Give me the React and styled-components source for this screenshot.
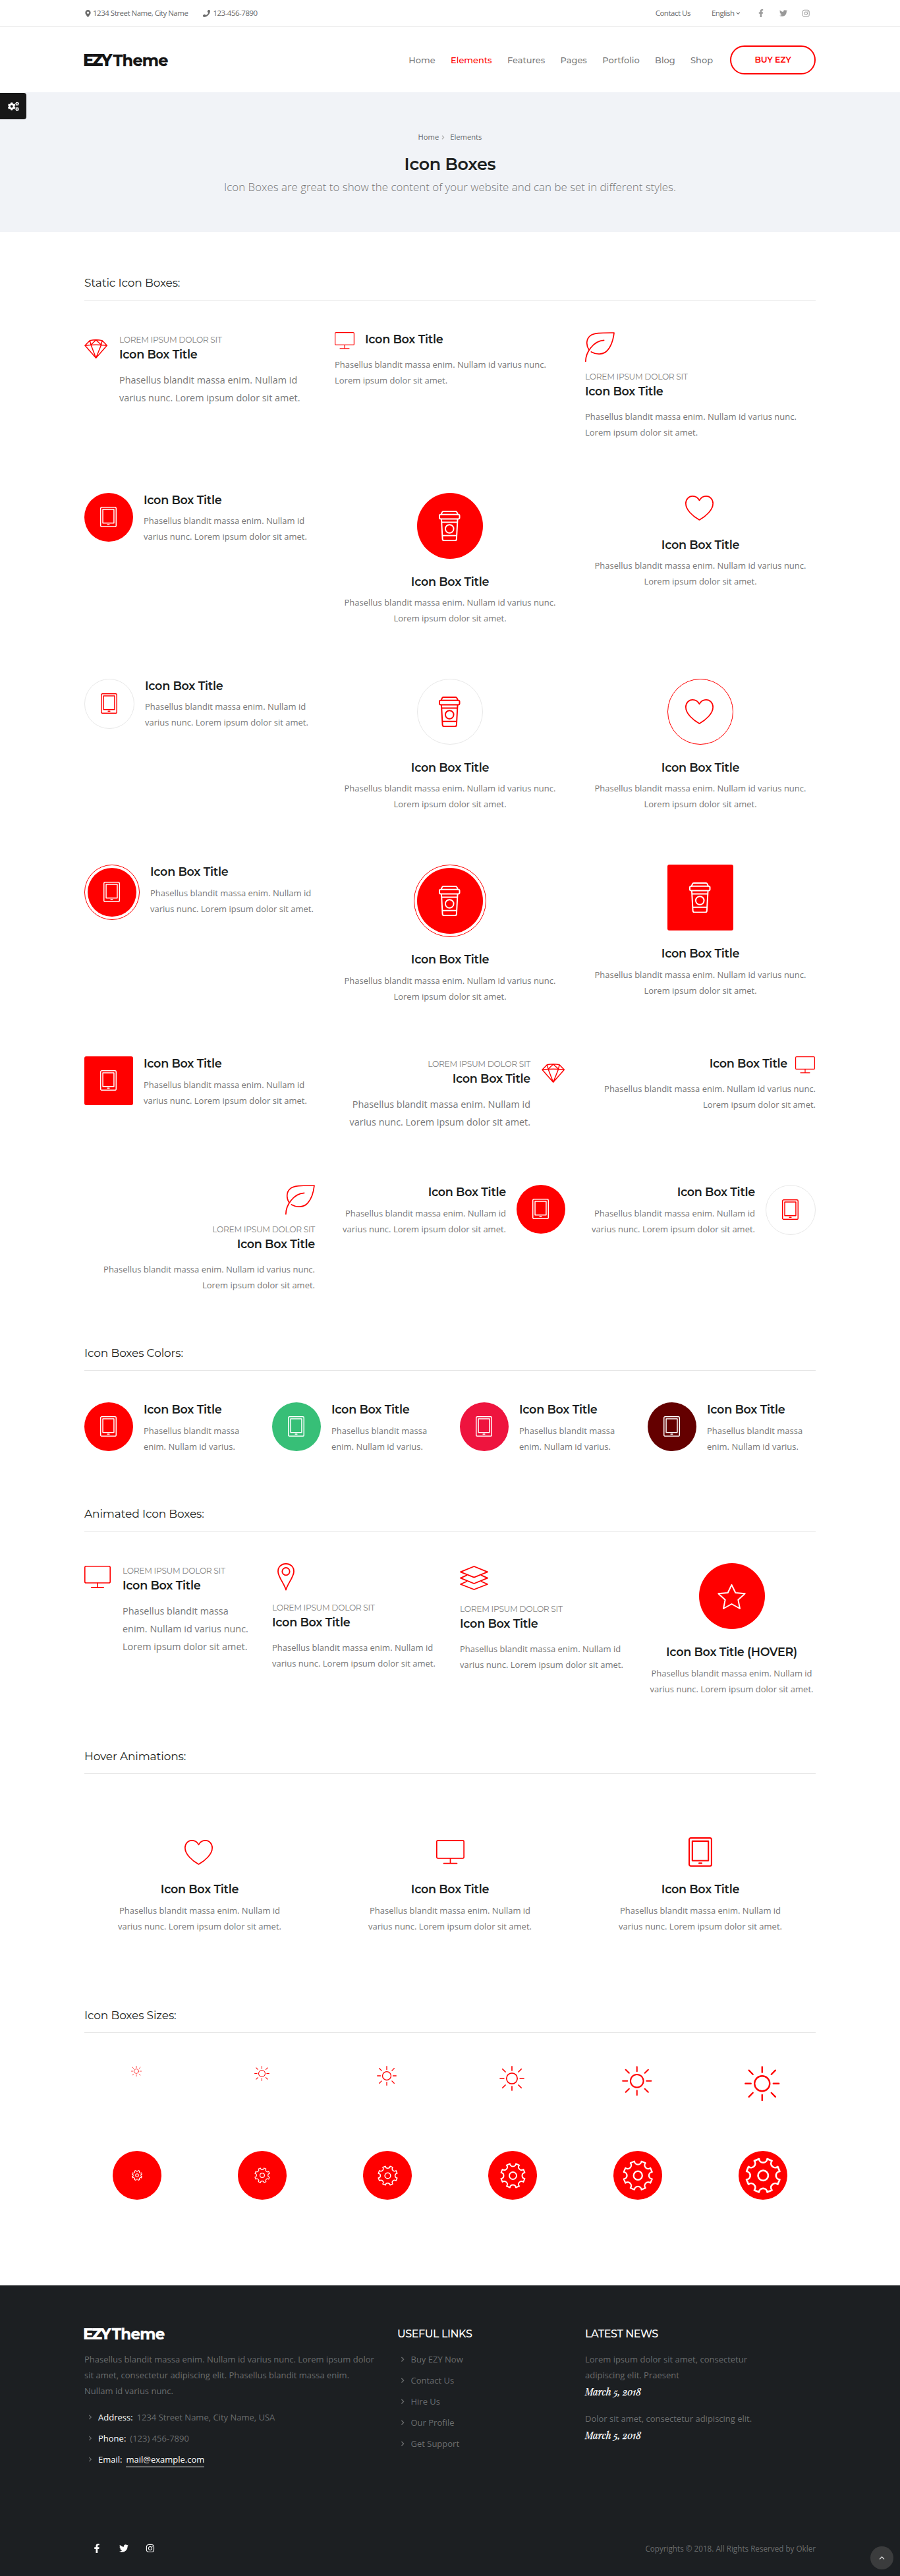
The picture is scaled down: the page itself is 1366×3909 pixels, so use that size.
import React from "react";
import styled, { createGlobalStyle, css } from "styled-components";
import {
  FaMapMarkerAlt,
  FaPhone,
  FaFacebookF,
  FaTwitter,
  FaInstagram,
  FaCogs,
  FaChevronRight,
  FaChevronDown,
  FaChevronUp,
} from "react-icons/fa";

const RED = "#ff0000";
const HEAD = '"Montserrat", "Inter", "Open Sans", sans-serif';

const Global = createGlobalStyle`
  *, *::before, *::after { box-sizing: border-box; }
  body {
    margin: 0;
    background: #fff;
    color: #777;
    font-family: "Open Sans", "Noto Sans", sans-serif;
    font-size: 13px;
    line-height: 24px;
  }
  h1, h2, h3, h4, p, ul { margin: 0; padding: 0; }
  ul { list-style: none; }
  a { color: inherit; text-decoration: none; }
  svg { display: block; flex: none; }
`;

/* ---------- line icons ---------- */

const gearPath = (() => {
  const pt = (deg) => {
    const a = (deg * Math.PI) / 180;
    return `${(82 + 78 * Math.cos(a)).toFixed(2)} ${(82 + 78 * Math.sin(a)).toFixed(2)}`;
  };
  let d = "";
  for (let k = 0; k < 8; k += 1) {
    d += `${k ? "L" : "M"}${pt(45 * k - 14)}A19 19 0 0 0 ${pt(45 * k + 14)}`;
  }
  return `${d}Z`;
})();

const ICONS = {
  diamond: {
    w: 105, h: 88, sw: 4.4,
    body: (
      <path d="M3 28L25 5Q53 0 81 5L103 28L53 85ZM3 28Q53 21 103 28M25 5L30 25L53 3L77 25L81 5M30 25L53 85L77 25" />
    ),
  },
  monitor: {
    w: 90, h: 77, sw: 3.6,
    body: (
      <>
        <rect x="1.8" y="1.8" width="86.4" height="56.6" rx="4" />
        <path d="M45 59V74M24 74.5H66" />
      </>
    ),
  },
  leaf: {
    w: 135, h: 136, sw: 5.2,
    body: (
      <>
        <path d="M2.6 133C2.6 95 35 40 86 37" />
        <path d="M18 81C4 60 4 32 24 16C42 2 75 3 132 3C128 40 118 65 102 83C85 103 52 104 28 90" />
      </>
    ),
  },
  tablet: {
    w: 74, h: 92, sw: 4.4, mr: 1, mb: 1,
    body: (
      <>
        <rect x="2.2" y="2.2" width="69.6" height="87.6" rx="5" />
        <rect x="12" y="12" width="50" height="61" />
        <path d="M33 81H41" />
      </>
    ),
  },
  coffee: {
    w: 98, h: 140, sw: 6, mr: 1,
    body: (
      <>
        <path d="M11 17L15 7Q17 3 21 3H77Q81 3 83 7L87 17" />
        <rect x="3" y="17" width="92" height="21" rx="6" />
        <path d="M12 39L17 131Q18 137 24 137H74Q80 137 81 131L86 39M14 53H84M17 114H81" />
        <circle cx="49" cy="83" r="19" />
      </>
    ),
  },
  heart: {
    w: 129, h: 114, sw: 5.2, mr: 2.5,
    body: (
      <path d="M64.5 22C56 6 44 2.6 34 2.6C16 2.6 2.6 17 2.6 36C2.6 66 36 95 64.5 111C93 95 126.4 66 126.4 36C126.4 17 113 2.6 95 2.6C85 2.6 73 6 64.5 22Z" />
    ),
  },
  pin: {
    w: 78, h: 126, sw: 5.4,
    body: (
      <>
        <path d="M39 122C34 98 3 62 3 38C3 17 18 3 39 3S75 17 75 38C75 62 44 98 39 122Z" />
        <circle cx="39" cy="38" r="17" />
      </>
    ),
  },
  layers: {
    w: 129, h: 111, sw: 5.4,
    body: (
      <path d="M64.5 3L126 28L64.5 53L3 28ZM30 44L3 56L64.5 81L126 56L99 44M30 72L3 84L64.5 108L126 84L99 72" />
    ),
  },
  star: {
    w: 129, h: 117, sw: 6, mr: 1,
    body: (
      <path d="M64.5 6L82 42L125 46L94 74L102 114L64.5 93L27 114L35 74L4 46L47 42Z" />
    ),
  },
  sun: {
    w: 160, h: 160, sw: 7, mr: 2,
    body: (
      <>
        <circle cx="80" cy="80" r="34.5" />
        <path d="M80 4V29M80 131V156M4 80H29M131 80H156M20 20L38 38M122 122L140 140M140 20L122 38M38 122L20 140" />
      </>
    ),
  },
  gear: {
    w: 164, h: 164, sw: 8, min: 1.1,
    body: (
      <>
        <path d={gearPath} />
        <circle cx="82" cy="82" r="23" />
      </>
    ),
  },
};

const Glyph = styled.svg`
  margin: 0 ${(p) => p.$mr || 0}px ${(p) => p.$mb || 0}px 0;
`;

function Icon({ name, width }) {
  const icon = ICONS[name];
  return (
    <Glyph
      $mr={icon.mr}
      $mb={icon.mb}
      width={width}
      height={(width * icon.h) / icon.w}
      viewBox={`0 0 ${icon.w} ${icon.h}`}
      fill="none"
      stroke="currentColor"
      strokeWidth={Math.max(icon.sw, ((icon.min || 0) * icon.w) / width)}
      strokeLinecap="round"
      strokeLinejoin="round"
    >
      {icon.body}
    </Glyph>
  );
}

/* ---------- shared layout ---------- */

const Page = styled.div`
  position: relative;
  width: 1366px;
  height: 3909px;
  overflow: hidden;
`;

const Container = styled.div`
  width: 1110px;
  margin: 0 auto;
`;

/* ---------- header ---------- */

const TopBar = styled.div`
  height: 41px;
  border-bottom: 1px solid #ececec;
  font-size: 11.52px;
  letter-spacing: -0.5px;
  color: #6a6a6a;
`;

const TopInner = styled(Container)`
  display: flex;
  align-items: center;
  height: 40px;
`;

const TopItem = styled.span`
  display: flex;
  align-items: center;
  gap: ${(p) => p.$gap || 4}px;
  margin-right: ${(p) => p.$mr || 0}px;
`;

const Spacer = styled.span`
  flex: 1;
`;

const TopSocial = styled.span`
  display: flex;
  align-items: center;
  color: #999;
  gap: 22px;
  padding-right: 8.5px;
`;

const NavBar = styled(Container)`
  display: flex;
  align-items: center;
  height: 99px;
  padding-top: 1px;
`;

const Nav = styled.nav`
  display: flex;
  gap: 23.4px;
  margin-left: auto;
  margin-right: 26px;
  font: 500 12.96px/24px ${HEAD};
`;

const NavLink = styled.a`
  white-space: nowrap;
  color: ${(p) => (p.$active ? RED : "#7c7c7c")};
`;

const BuyButton = styled.a`
  display: flex;
  align-items: center;
  justify-content: center;
  width: 130px;
  height: 44px;
  padding-bottom: 1px;
  border: 2px solid ${RED};
  border-radius: 22px;
  color: ${RED};
  font: 600 12.5px/20px ${HEAD};
  letter-spacing: -0.1px;
`;

const LogoMark = styled.svg`
  margin: -4px -3px;
`;

function Logo({ width, color }) {
  const k = width / 127;
  return (
    <LogoMark width={143 * k} height={30 * k} viewBox="-3 -4 143 30" fill={color}>
      <text x="-2" y="19.5" fontFamily="Montserrat, Inter, sans-serif" fontWeight="800" fontSize="24.4" textLength="44.5" lengthAdjust="spacing">
        EZY
      </text>
      <text x="43.5" y="19.5" fontFamily="Montserrat, Inter, sans-serif" fontWeight="700" fontSize="24" textLength="84" lengthAdjust="spacing" stroke={color} strokeWidth="0.3">
        Theme
      </text>
    </LogoMark>
  );
}

const SettingsTab = styled.div`
  position: absolute;
  left: 0;
  top: 141px;
  display: flex;
  align-items: center;
  justify-content: center;
  width: 40px;
  height: 40px;
  border-radius: 0 4px 4px 0;
  background: #171717;
  color: #fff;
`;

const Hero = styled.section`
  display: flex;
  flex-direction: column;
  align-items: center;
  height: 212px;
  padding-top: 58px;
  background: #f1f3f7;
`;

const Crumbs = styled.div`
  display: flex;
  align-items: center;
  height: 20px;
  font-size: 11.2px;
  color: #666;
  svg { margin: 0 7px 0 3px; color: #aaa; }
`;

const HeroTitle = styled.h1`
  margin-top: 15px;
  font: 600 25.4px/32px ${HEAD};
  letter-spacing: -0.3px;
  color: #1c1f21;
`;

const HeroText = styled.p`
  margin-top: 4px;
  font-size: 16.9px;
  font-weight: 300;
  line-height: 30px;
  color: #777;
`;

/* ---------- sections ---------- */

const SectionTitle = styled.h2`
  height: 39px;
  margin-bottom: ${(p) => p.$mb || 48}px;
  border-bottom: 1px solid #e4e4e4;
  color: #1c1f21;
  font: 400 17px/24px ${HEAD};
  letter-spacing: -0.14px;
`;

const Row = styled.div`
  --text-gap: ${(p) => (p.$tight ? 9 : 10)}px;
  display: grid;
  grid-template-columns: repeat(${(p) => p.$cols || 3}, minmax(0, 1fr));
  column-gap: 30px;
  align-items: start;
  height: ${(p) => p.$h}px;
`;

const SideBox = styled.div`
  display: flex;
  flex-direction: ${(p) => (p.$reverse ? "row-reverse" : "row")};
  align-items: flex-start;
  gap: ${(p) => p.$gap || 16}px;
  text-align: ${(p) => (p.$reverse ? "right" : "left")};
`;

const StackBox = styled.div`
  display: flex;
  flex-direction: column;
  align-items: ${(p) => ({ left: "flex-start", right: "flex-end", center: "center" }[p.$align || "left"])};
  text-align: ${(p) => p.$align || "left"};
  padding: 0 ${(p) => p.$px || 0}px;
`;

const Body = styled.div`
  flex: 1;
  min-width: 0;
`;

const Label = styled.div`
  padding-top: 1px;
  font: 400 12.3px/22px ${HEAD};
  letter-spacing: -0.33px;
  text-transform: uppercase;
  color: #858585;
`;

const Title = styled.h4`
  padding: 1px 0;
  color: #1c1f21;
  font: 600 17.6px/19px ${HEAD};
  letter-spacing: -0.3px;
  white-space: nowrap;
`;

const Text = styled.p`
  margin-top: ${(p) => (p.$mt ? `${p.$mt}px` : "var(--text-gap)")};
  font-size: ${(p) => (p.$large ? 14.4 : 13)}px;
  line-height: ${(p) => (p.$large ? 27 : 24)}px;
`;

const IconSlot = styled.div`
  display: flex;
  flex: none;
  justify-content: ${(p) => (p.$center ? "center" : "flex-start")};
  height: ${(p) => p.$h}px;
  padding-top: ${(p) => p.$pt || 0}px;
  margin-bottom: ${(p) => p.$mb || 0}px;
  color: ${RED};
`;

const TitleLine = styled.div`
  display: flex;
  flex-direction: ${(p) => (p.$reverse ? "row-reverse" : "row")};
  gap: ${(p) => (p.$reverse ? 12 : 16)}px;
  height: 22px;
  padding-right: ${(p) => (p.$reverse ? 1 : 0)}px;
  color: ${RED};
`;

const Badge = styled.div`
  display: flex;
  flex: none;
  align-items: center;
  justify-content: center;
  width: ${(p) => p.$size}px;
  height: ${(p) => p.$size}px;
  margin-bottom: ${(p) => p.$mb || 0}px;
  border-radius: ${(p) => (p.$square ? "3px" : "50%")};
  color: #fff;
  ${(p) =>
    p.$outline
      ? css`
          color: ${RED};
          border: 1px solid ${p.$outline};
        `
      : css`
          background: ${p.$bg || RED};
        `}
  ${(p) =>
    p.$ring &&
    css`
      border: 1px solid ${RED};
      padding: 4px;
      background-clip: content-box;
    `}
`;

const IndentIcon = styled.span`
  display: block;
  margin-left: ${(p) => p.$x || 0}px;
`;

const InsetBox = styled.div`
  padding-right: ${(p) => p.$inset || 0}px;
`;

const SHORT = "Phasellus blandit massa enim. Nullam id varius.";
const LONG = "Phasellus blandit massa enim. Nullam id varius nunc. Lorem ipsum dolor sit amet.";
const LABEL = "Lorem ipsum dolor sit";
const TITLE = "Icon Box Title";

function SideBadge({ reverse, text = LONG, size = 74, ...badge }) {
  return (
    <SideBox $reverse={reverse}>
      <Badge $size={size} {...badge}>
        <Icon name="tablet" width={25} />
      </Badge>
      <Body>
        <Title>{TITLE}</Title>
        <Text>{text}</Text>
      </Body>
    </SideBox>
  );
}

function CenterBadge({ icon, iconWidth, size = 100, mb = 24, title = TITLE, ...badge }) {
  return (
    <StackBox $align="center">
      <Badge $size={size} $mb={mb} {...badge}>
        <Icon name={icon} width={iconWidth} />
      </Badge>
      <Title>{title}</Title>
      <Text>{LONG}</Text>
    </StackBox>
  );
}

function CenterPlain({ icon, width, pt, px }) {
  return (
    <StackBox $align="center" $px={px}>
      <IconSlot $h={44} $pt={pt} $mb={24} $center>
        <Icon name={icon} width={width} />
      </IconSlot>
      <Title>{TITLE}</Title>
      <Text>{LONG}</Text>
    </StackBox>
  );
}

function StackLabeled({ icon, width, slot = 44, pt = 0, indent, align }) {
  return (
    <StackBox $align={align}>
      <IconSlot $h={slot} $pt={pt} $mb={12}>
        <IndentIcon $x={indent}>
          <Icon name={icon} width={width} />
        </IndentIcon>
      </IconSlot>
      <Label>{LABEL}</Label>
      <Title>{TITLE}</Title>
      <Text $mt={16}>{LONG}</Text>
    </StackBox>
  );
}

function SideLabeled({ icon, width, pt, gap, reverse, inset }) {
  return (
    <InsetBox $inset={inset}>
      <SideBox $gap={gap} $reverse={reverse}>
        <IconSlot $h={50} $pt={pt}>
          <Icon name={icon} width={width} />
        </IconSlot>
        <Body>
          <Label>{LABEL}</Label>
          <Title>{TITLE}</Title>
          <Text $large $mt={15.4}>{LONG}</Text>
        </Body>
      </SideBox>
    </InsetBox>
  );
}

function InlineTitle({ reverse }) {
  return (
    <StackBox $align={reverse ? "right" : "left"}>
      <TitleLine $reverse={reverse}>
        <Icon name="monitor" width={30} />
        <Title>{TITLE}</Title>
      </TitleLine>
      <Text $mt={15}>{LONG}</Text>
    </StackBox>
  );
}

const SizeRow = styled.div`
  display: grid;
  grid-template-columns: repeat(6, 160px);
  column-gap: 30px;
  justify-items: center;
  align-items: start;
  height: ${(p) => p.$h}px;
  padding-top: ${(p) => p.$pt || 0}px;
  color: ${RED};
`;

/* ---------- footer ---------- */

const Footer = styled.footer`
  height: 441px;
  padding-top: 63px;
  background: #1c1f22;
  color: #6b6d6e;
`;

const FooterGrid = styled(Container)`
  display: grid;
  grid-template-columns: 475px 285px 262px;
  height: 324px;
`;

const FooterLogo = styled.div`
  display: flex;
  align-items: flex-start;
  height: 37px;
`;

const FooterAbout = styled.p`
  width: 445px;
`;

const FooterTitle = styled.h3`
  height: 37px;
  color: #fff;
  font: 500 16px/21px ${HEAD};
  letter-spacing: -0.43px;
`;

const ContactList = styled.ul`
  margin-top: 12px;
`;

const Item = styled.li`
  display: flex;
  align-items: center;
  gap: 8.5px;
  height: 32px;
  padding-left: ${(p) => p.$pl || 4.5}px;
`;

const LinkList = styled.ul`
  margin-top: -4px;
`;

const Strong = styled.span`
  color: #fff;
  margin-right: 6px;
`;

const Mail = styled.a`
  color: #fff;
  height: 24px;
  border-bottom: 1px solid #fff;
`;

const ContactValue = styled.span`
  display: flex;
`;

const NewsText = styled.p`
  margin-top: ${(p) => p.$mt || 0}px;
`;

const NewsDate = styled.div`
  color: #fff;
  font: italic 400 14.4px/27px "Playfair Display", "Liberation Serif", serif;
  -webkit-text-stroke: 0.25px #fff;
`;

const FooterBottom = styled(Container)`
  display: flex;
  align-items: center;
  height: 24px;
`;

const FooterSocial = styled.div`
  display: flex;
  align-items: center;
  gap: 26.5px;
  padding-left: 12px;
  color: #fff;
`;

const Copyright = styled.p`
  margin-left: auto;
  font-size: 11.7px;
`;

const ScrollTop = styled.div`
  position: absolute;
  right: 10px;
  bottom: 10px;
  display: flex;
  align-items: center;
  justify-content: center;
  width: 35px;
  height: 35px;
  border-radius: 50%;
  background: #3b3c3d;
  color: #d0d0d0;
`;

const MainArea = styled(Container).attrs({ as: "main" })`
  display: block;
  height: 3116px;
  padding-top: 65px;
`;

const NAV = ["Home", "Elements", "Features", "Pages", "Portfolio", "Blog", "Shop"];
const LINKS = ["Buy EZY Now", "Contact Us", "Hire Us", "Our Profile", "Get Support"];
const COLORS = [RED, "#37bf77", "#ee143e", "#640000"];
const GREY = "#e8e8e8";

export default function App() {
  return (
    <Page>
      <Global />
      <TopBar>
        <TopInner>
          <TopItem $gap={2} $mr={23}>
            <FaMapMarkerAlt size={11} />
            1234 Street Name, City Name
          </TopItem>
          <TopItem>
            <FaPhone size={11} />
            123-456-7890
          </TopItem>
          <Spacer />
          <TopItem $mr={32}>Contact Us</TopItem>
          <TopItem $gap={2} $mr={26}>
            English
            <FaChevronDown size={6.5} />
          </TopItem>
          <TopSocial>
            <FaFacebookF size={12} />
            <FaTwitter size={12} />
            <FaInstagram size={12.5} />
          </TopSocial>
        </TopInner>
      </TopBar>
      <NavBar>
        <Logo width={127} color="#151515" />
        <Nav>
          {NAV.map((label) => (
            <NavLink key={label} $active={label === "Elements"}>
              {label}
            </NavLink>
          ))}
        </Nav>
        <BuyButton>BUY EZY</BuyButton>
      </NavBar>
      <Hero>
        <Crumbs>
          <span>Home</span>
          <FaChevronRight size={7} />
          <span>Elements</span>
        </Crumbs>
        <HeroTitle>Icon Boxes</HeroTitle>
        <HeroText>
          Icon Boxes are great to show the content of your website and can be set in different styles.
        </HeroText>
      </Hero>
      <SettingsTab>
        <FaCogs size={17} />
      </SettingsTab>

      <MainArea>
        <SectionTitle>Static Icon Boxes:</SectionTitle>
        <Row $h={244}>
          <SideLabeled icon="diamond" width={35} pt={11} gap={18} />
          <InlineTitle />
          <StackLabeled icon="leaf" width={45} />
        </Row>
        <Row $h={282} $tight>
          <SideBadge />
          <CenterBadge icon="coffee" iconWidth={32.5} />
          <CenterPlain icon="heart" width={43} pt={4} />
        </Row>
        <Row $h={282} $tight>
          <SideBadge size={76} $outline={GREY} />
          <CenterBadge icon="coffee" iconWidth={32.5} $outline={GREY} />
          <CenterBadge icon="heart" iconWidth={43} $outline={RED} />
        </Row>
        <Row $h={291}>
          <SideBadge size={84} $ring />
          <CenterBadge icon="coffee" iconWidth={32.5} size={110} mb={23} $ring />
          <CenterBadge icon="coffee" iconWidth={32.5} $square />
        </Row>
        <Row $h={195}>
          <SideBadge $square />
          <SideLabeled icon="diamond" width={35} pt={11} gap={17} reverse inset={1} />
          <InlineTitle reverse />
        </Row>
        <Row $h={243}>
          <StackLabeled icon="leaf" width={45} align="right" />
          <SideBadge reverse />
          <SideBadge reverse size={76} $outline={GREY} />
        </Row>

        <SectionTitle>Icon Boxes Colors:</SectionTitle>
        <Row $cols={4} $h={157}>
          {COLORS.map((bg) => (
            <SideBadge key={bg} text={SHORT} $bg={bg} />
          ))}
        </Row>

        <SectionTitle>Animated Icon Boxes:</SectionTitle>
        <Row $cols={4} $h={281}>
          <SideLabeled icon="monitor" width={40} pt={4} gap={18} />
          <StackLabeled icon="pin" width={26} indent={8} />
          <StackLabeled icon="layers" width={43} slot={46} pt={4} />
          <CenterBadge icon="star" iconWidth={43} title="Icon Box Title (HOVER)" />
        </Row>

        <SectionTitle $mb={96}>Hover Animations:</SectionTitle>
        <Row $h={258}>
          <CenterPlain icon="heart" width={43} pt={4} px={45} />
          <CenterPlain icon="monitor" width={43} pt={4} px={45} />
          <CenterPlain icon="tablet" width={36} px={45} />
        </Row>

        <SectionTitle>Icon Boxes Sizes:</SectionTitle>
        <SizeRow $h={131} $pt={1.5}>
          {[16, 23, 30, 38, 45.5, 53.5].map((s) => (
            <Icon key={s} name="sun" width={s} />
          ))}
        </SizeRow>
        <SizeRow $h={204}>
          {[16, 24, 31, 39, 46.5, 54.5].map((s) => (
            <Badge key={s} $size={74}>
              <Icon name="gear" width={s} />
            </Badge>
          ))}
        </SizeRow>
      </MainArea>

      <Footer>
        <FooterGrid>
          <div>
            <FooterLogo>
              <Logo width={122} color="#fff" />
            </FooterLogo>
            <FooterAbout>
              Phasellus blandit massa enim. Nullam id varius nunc. Lorem ipsum dolor sit amet, consectetur
              adipiscing elit. Phasellus blandit massa enim. Nullam id varius nunc.
            </FooterAbout>
            <ContactList>
              <Item>
                <FaChevronRight size={8} />
                <ContactValue><Strong>Address:</Strong> 1234 Street Name, City Name, USA</ContactValue>
              </Item>
              <Item>
                <FaChevronRight size={8} />
                <ContactValue><Strong>Phone:</Strong> (123) 456-7890</ContactValue>
              </Item>
              <Item>
                <FaChevronRight size={8} />
                <ContactValue><Strong>Email:</Strong> <Mail>mail@example.com</Mail></ContactValue>
              </Item>
            </ContactList>
          </div>
          <div>
            <FooterTitle>USEFUL LINKS</FooterTitle>
            <LinkList>
              {LINKS.map((l) => (
                <Item key={l} $pl={3.5}>
                  <FaChevronRight size={8.5} />
                  <span>{l}</span>
                </Item>
              ))}
            </LinkList>
          </div>
          <div>
            <FooterTitle>LATEST NEWS</FooterTitle>
            <NewsText>Lorem ipsum dolor sit amet, consectetur adipiscing elit. Praesent</NewsText>
            <NewsDate>March 5, 2018</NewsDate>
            <NewsText $mt={15}>Dolor sit amet, consectetur adipiscing elit.</NewsText>
            <NewsDate>March 5, 2018</NewsDate>
          </div>
        </FooterGrid>
        <FooterBottom>
          <FooterSocial>
            <FaFacebookF size={14} />
            <FaTwitter size={14} />
            <FaInstagram size={14} />
          </FooterSocial>
          <Copyright>Copyrights © 2018. All Rights Reserved by Okler</Copyright>
        </FooterBottom>
      </Footer>
      <ScrollTop>
        <FaChevronUp size={9} />
      </ScrollTop>
    </Page>
  );
}
